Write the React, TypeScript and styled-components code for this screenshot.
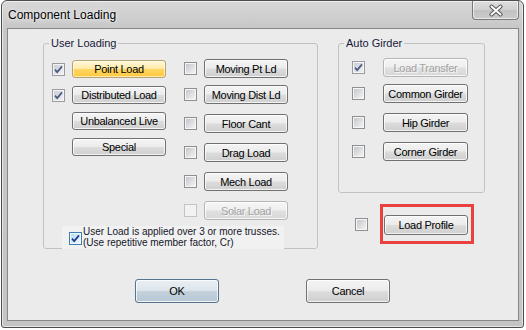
import React from 'react';
import styled, { createGlobalStyle, css } from 'styled-components';

const GlobalStyle = createGlobalStyle`
  html, body {
    margin: 0;
    padding: 0;
    background: #ffffff;
  }
  body {
    font-family: "Liberation Sans", Arial, sans-serif;
  }
`;

const Window = styled.div`
  box-sizing: border-box;
  width: 523px;
  height: 328px;
  margin-left: 1px;
  padding: 0 4px 6px 5px;
  border: 1px solid #4d4d4d;
  border-radius: 6px 6px 3px 3px;
  background: linear-gradient(#d8d8d8, #c7c7c7 28px, #c4c4c4);
  box-shadow: inset 0 0 0 1px rgba(255, 255, 255, 0.55);
  display: flex;
  flex-direction: column;
`;

const TitleBar = styled.div`
  height: 27px;
  flex: none;
  display: flex;
  align-items: center;
  padding-left: 1px;
`;

const Title = styled.span`
  font-size: 12px;
  color: #000;
  text-shadow: 0 0 6px rgba(255, 255, 255, 0.9), 0 0 2px rgba(255, 255, 255, 0.8);
`;

const CloseButton = styled.div`
  box-sizing: border-box;
  margin-left: auto;
  align-self: flex-start;
  width: 47px;
  height: 19px;
  border: 1px solid #7a7a7a;
  border-top: none;
  border-radius: 0 0 4px 4px;
  background: linear-gradient(#dedede, #d0d0d0 50%, #c2c2c2 51%, #cbcbcb);
  box-shadow: inset 0 0 0 1px rgba(255, 255, 255, 0.6);
  display: flex;
  align-items: center;
  justify-content: center;
`;

const Client = styled.div`
  box-sizing: border-box;
  height: 293px;
  border: 1px solid #878787;
  background: #ebebeb;
  padding-top: 7px;
  display: flex;
  flex-direction: column;
`;

const GroupsRow = styled.div`
  display: flex;
  align-items: flex-start;
  gap: 20px;
  margin-left: 35px;
`;

const GroupBox = styled.fieldset<{ $w: number; $h: number }>`
  box-sizing: border-box;
  width: ${(p) => p.$w}px;
  height: ${(p) => p.$h}px;
  min-width: 0;
  margin: 0;
  padding: 0;
  border: 1px solid #c2c2c2;
  border-radius: 3px;
  display: flex;
  flex-direction: column;
`;

const Legend = styled.legend`
  margin-left: 5px;
  padding: 0 2px;
  font-size: 11px;
  line-height: 14px;
  color: #16193a;
`;

const Columns = styled.div`
  display: flex;
  gap: 18px;
  padding-left: 8px;
`;

const Column = styled.div<{ $top: number; $gap: number; $tightFirst?: boolean; $left?: number }>`
  display: flex;
  flex-direction: column;
  padding-top: ${(p) => p.$top}px;
  padding-left: ${(p) => p.$left ?? 0}px;
  gap: ${(p) => p.$gap}px;
  ${(p) =>
    p.$tightFirst &&
    css`
      & > :first-child {
        margin-bottom: -3px;
      }
    `}
`;

const Row = styled.div<{ $gap?: number }>`
  display: flex;
  align-items: center;
  gap: ${(p) => p.$gap ?? 7}px;
`;

type BoxState = 'normal' | 'disabled' | 'dim' | 'active';

const Box = styled.span<{ $state: BoxState; $top?: number }>`
  box-sizing: border-box;
  flex: none;
  width: 13px;
  height: 13px;
  padding: 1px;
  margin-top: ${(p) => p.$top ?? 0}px;
  border: 1px solid #8e8f8f;
  background: linear-gradient(135deg, #c4c7cc, #f3f3f3) content-box, #f6f6f6;
  display: flex;
  align-items: center;
  justify-content: center;
  ${(p) =>
    p.$state === 'disabled' &&
    css`
      border-color: #c4c4c4;
      background: #f2f2f2;
    `}
  ${(p) =>
    p.$state === 'dim' &&
    css`
      border-color: #9a9ca0;
      background: linear-gradient(135deg, #c9ced6, #eef0f3) content-box, #f4f4f4;
      color: #4d5a80;
    `}
  ${(p) =>
    p.$state === 'active' &&
    css`
      border-color: #3c7fb1;
      background: linear-gradient(135deg, #bcdcf2, #eef7fd) content-box, #f2f8fc;
      color: #1b3b8e;
    `}
`;

const Spacer = styled.span`
  flex: none;
  width: 13px;
  height: 13px;
`;

const CheckMark = () => (
  <svg width="11" height="11" viewBox="0 0 11 11" style={{ margin: -1 }}>
    <path d="M2 5.6l2.2 2.5L9 2.4" fill="none" stroke="currentColor" strokeWidth="1.7" />
  </svg>
);

const Check: React.FC<{ state?: BoxState; checked?: boolean; top?: number }> = ({
  state = 'normal',
  checked,
  top,
}) => (
  <Box $state={state} $top={top}>
    {checked && <CheckMark />}
  </Box>
);

type BtnVariant = 'normal' | 'hot' | 'disabled' | 'default';

const Btn = styled.button<{ $w: number; $h: number; $variant?: BtnVariant }>`
  box-sizing: border-box;
  flex: none;
  width: ${(p) => p.$w}px;
  height: ${(p) => p.$h}px;
  margin: 0;
  padding: 0;
  font-family: "Liberation Sans", Arial, sans-serif;
  font-size: 11px;
  letter-spacing: -0.3px;
  color: #000;
  border: 1px solid #707070;
  border-radius: 3px;
  background: linear-gradient(#f4f4f4 0%, #ececec 47%, #dcdcdc 53%, #cfcfcf 100%);
  box-shadow: inset 0 0 0 1px rgba(255, 255, 255, 0.75);
  display: flex;
  align-items: center;
  justify-content: center;
  ${(p) =>
    p.$variant === 'hot' &&
    css`
      border-color: #b9a273;
      background: linear-gradient(#fff8dc 0%, #ffeba8 47%, #ffd663 53%, #ffc83e 100%);
      box-shadow: inset 0 0 0 1px rgba(255, 255, 240, 0.6);
    `}
  ${(p) =>
    p.$variant === 'disabled' &&
    css`
      border-color: #b6b6b6;
      color: #a3a3a3;
      background: linear-gradient(#f5f5f5 0%, #efefef 47%, #e0e0e0 53%, #d8d8d8 100%);
      text-shadow: 1px 1px 0 #f8f8f8;
    `}
  ${(p) =>
    p.$variant === 'default' &&
    css`
      border-color: #56738f;
      background: linear-gradient(#e9eff4 0%, #dde5ec 47%, #c3d0db 53%, #b7c7d4 100%);
    `}
`;

const Footer = styled.div`
  box-sizing: border-box;
  width: 222px;
  height: 23px;
  margin: auto 0 -1px 18px;
  padding-left: 7px;
  background: #f1f1f1;
  display: flex;
  align-items: flex-start;
`;

const FooterText = styled.div`
  margin-left: 1px;
  font-size: 10px;
  line-height: 11px;
  white-space: nowrap;
  color: #14162a;
`;

const RightCol = styled.div`
  display: flex;
  flex-direction: column;
`;

const ProfileRow = styled.div`
  display: flex;
  gap: 12px;
  margin-top: 11px;
  padding-left: 17px;
`;

const Highlight = styled.div`
  box-sizing: border-box;
  width: 94px;
  height: 40px;
  border: 3px solid #e8413f;
  padding: 8px 3px 6px 1px;
`;

const ButtonsRow = styled.div`
  display: flex;
  gap: 87px;
  margin-top: 30px;
  padding-left: 127px;
`;

const CloseGlyph = () => (
  <svg width="16" height="13" viewBox="0 0 16 13">
    <path d="M3.5 2.5l9 8M12.5 2.5l-9 8" stroke="#555" strokeWidth="4" strokeLinecap="round" />
    <path d="M3.5 2.5l9 8M12.5 2.5l-9 8" stroke="#ffffff" strokeWidth="2" strokeLinecap="round" />
  </svg>
);

const App: React.FC = () => {
  const leftRows: { label: string; check?: boolean; variant?: BtnVariant }[] = [
    { label: 'Point Load', check: true, variant: 'hot' },
    { label: 'Distributed Load', check: true },
    { label: 'Unbalanced Live' },
    { label: 'Special' },
  ];
  const midRows: { label: string; disabled?: boolean }[] = [
    { label: 'Moving Pt Ld' },
    { label: 'Moving Dist Ld' },
    { label: 'Floor Cant' },
    { label: 'Drag Load' },
    { label: 'Mech Load' },
    { label: 'Solar Load', disabled: true },
  ];
  const girderRows: { label: string; checked?: boolean; disabled?: boolean }[] = [
    { label: 'Load Transfer', checked: true, disabled: true },
    { label: 'Common Girder' },
    { label: 'Hip Girder' },
    { label: 'Corner Girder' },
  ];

  return (
    <>
      <GlobalStyle />
      <Window>
        <TitleBar>
          <Title>Component Loading</Title>
          <CloseButton>
            <CloseGlyph />
          </CloseButton>
        </TitleBar>
        <Client>
          <GroupsRow>
            <GroupBox $w={275} $h={213}>
              <Legend>User Loading</Legend>
              <Columns>
                <Column $top={10} $gap={8}>
                  {leftRows.map((r) => (
                    <Row key={r.label}>
                      {r.check ? <Check state="dim" checked /> : <Spacer />}
                      <Btn $w={94} $h={18} $variant={r.variant}>
                        {r.label}
                      </Btn>
                    </Row>
                  ))}
                </Column>
                <Column $top={9} $gap={10} $tightFirst>
                  {midRows.map((r) => (
                    <Row key={r.label}>
                      <Check state={r.disabled ? 'disabled' : 'normal'} />
                      <Btn $w={84} $h={19} $variant={r.disabled ? 'disabled' : 'normal'}>
                        {r.label}
                      </Btn>
                    </Row>
                  ))}
                </Column>
              </Columns>
              <Footer>
                <Check state="active" checked top={6} />
                <FooterText>
                  User Load is applied over 3 or more trusses.
                  <br />
                  (Use repetitive member factor, Cr)
                </FooterText>
              </Footer>
            </GroupBox>
            <RightCol>
              <GroupBox $w={147} $h={157}>
                <Legend>Auto Girder</Legend>
                <Column $top={8} $gap={10} $left={13} $tightFirst>
                  {girderRows.map((r) => (
                    <Row key={r.label} $gap={18}>
                      <Check state={r.checked ? 'dim' : 'normal'} checked={r.checked} />
                      <Btn $w={85} $h={19} $variant={r.disabled ? 'disabled' : 'normal'}>
                        {r.label}
                      </Btn>
                    </Row>
                  ))}
                </Column>
              </GroupBox>
              <ProfileRow>
                <Check top={14} />
                <Highlight>
                  <Btn $w={84} $h={20}>
                    Load Profile
                  </Btn>
                </Highlight>
              </ProfileRow>
            </RightCol>
          </GroupsRow>
          <ButtonsRow>
            <Btn $w={84} $h={24} $variant="default">
              OK
            </Btn>
            <Btn $w={84} $h={24}>
              Cancel
            </Btn>
          </ButtonsRow>
        </Client>
      </Window>
    </>
  );
};

export default App;
